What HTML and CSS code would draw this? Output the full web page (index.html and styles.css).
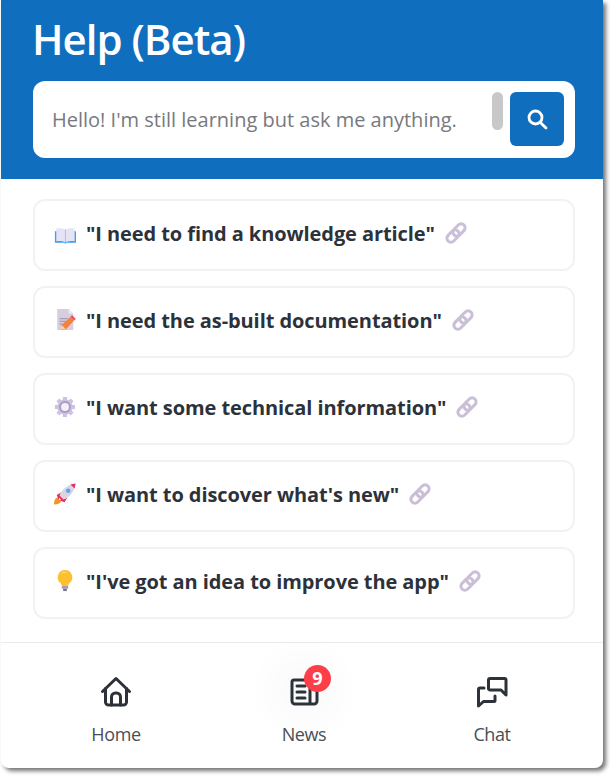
FILE: index.html
```html
<!DOCTYPE html>
<html lang="en">
<head>
<meta charset="utf-8">
<title>Help (Beta)</title>
<link rel="stylesheet" href="styles.css">
</head>
<body>
<svg class="defs" aria-hidden="true"><symbol id="chain" viewBox="0 0 24 24"><g fill="none" stroke="#cbbfd8" stroke-width="3"><rect x="11" y="1.900" width="8" height="14" rx="4" transform="rotate(45 15 8.900)"/><rect x="5" y="8.100" width="8" height="14" rx="4" transform="rotate(45 9 15.100)"/></g></symbol></svg>
<div class="app">
  <header class="header">
    <h1 class="title">Help (Beta)</h1>
    <div class="search">
      <span class="placeholder">Hello! I'm still learning but ask me anything.</span>
      <span class="thumb"></span>
      <button class="search-btn" aria-label="Search">
        <svg width="24" height="24" viewBox="0 0 24 24" fill="none" stroke="#fff" stroke-width="2.800" stroke-linecap="round"><circle cx="10.500" cy="10.500" r="6.500"/><path d="M15.400 15.400 21 21"/></svg>
      </button>
    </div>
  </header>
  <main class="list">
    <a class="card">
      <svg class="emoji" viewBox="0 0 24 24"><path d="M1 10h23v12.500H13.500l-1 1.500-1-1.500H1z" fill="#3da0f0"/><path d="M2.500 7C6 6.500 9.800 6.800 12.500 8.300 15.200 6.800 19 6.500 22.500 7v14c-3.500-.4-7.300 0-10 1.200C9.800 21 6 20.600 2.500 21z" fill="#e6e3f5"/><path d="M12.500 8.300v13.900" stroke="#b9b3d6" stroke-width="1"/></svg>
      <span class="label">"I need to find a knowledge article"</span>
      <svg class="link"><use href="#chain"/></svg>
    </a>
    <a class="card">
      <svg class="emoji" viewBox="0 0 24 24"><path d="M3.500 0h12.500l5 5v18H3.500z" fill="#d6cee0"/><path d="M16 0l5 5h-5z" fill="#efeaf4"/><path d="M6 10.500h9M6 13.500h7M6 16.500h5" stroke="#a79db6" stroke-width="1.200"/><path d="M7 23l1.500-5.500L18 8.500l4 4L13 22z" fill="#f7813c"/><path d="M18 8.500l1.800-1.600 4 4-1.800 1.600z" fill="#f2475c"/><path d="M7 23l1.500-5.500 4 4z" fill="#f8d2a8"/></svg>
      <span class="label">"I need the as-built documentation"</span>
      <svg class="link"><use href="#chain"/></svg>
    </a>
    <a class="card">
      <svg class="emoji" viewBox="0 0 24 24"><circle cx="12" cy="12" r="8.500" fill="#cdc3e0"/><g stroke="#cdc3e0" stroke-width="4.500"><path d="M12 1v22M1 12h22M4.200 4.200l15.600 15.600M19.800 4.200 4.200 19.800"/></g><circle cx="12" cy="12" r="6.500" fill="#a99bc4"/><circle cx="12" cy="12" r="4.300" fill="#f3f0f8"/></svg>
      <span class="label">"I want some technical information"</span>
      <svg class="link"><use href="#chain"/></svg>
    </a>
    <a class="card">
      <svg class="emoji" viewBox="0 0 24 24"><path d="M0 23.500c0-4 1-6.500 3.500-8l4.500 4.500c-1.500 2.500-4 3.500-8 3.500z" fill="#f79329"/><path d="M3 13l5-3-3 8zM11.500 21l3-5-8 3z" fill="#e6305f"/><path d="M6 13.500C8.500 6.500 15.500 1.500 23.500.5c-1 8-6 15-13 17.500z" fill="#dad4e4"/><path d="M18 1.500 23.500.5 22.500 6z" fill="#f0285f"/><circle cx="15.500" cy="8.500" r="2.500" fill="#5ba8e8"/><path d="M6 13.500l4.500 4.500-1.500 1.500-4.500-4.500z" fill="#f0285f"/></svg>
      <span class="label">"I want to discover what's new"</span>
      <svg class="link"><use href="#chain"/></svg>
    </a>
    <a class="card">
      <svg class="emoji" viewBox="0 0 24 24"><path d="M12 0a8 8 0 0 0-5 14.200c1 1 1.500 2 1.500 3.300h7c0-1.300.5-2.300 1.500-3.300A8 8 0 0 0 12 0z" fill="#fdc02f"/><path d="M12 1.500a6 6 0 0 0-5 3 7 7 0 0 1 6.500-1z" fill="#ffe08a"/><path d="M8.500 17.500h7v3h-7z" fill="#a79db6"/><path d="M10 20.500h4V23h-4z" fill="#7d7390"/></svg>
      <span class="label">"I've got an idea to improve the app"</span>
      <svg class="link"><use href="#chain"/></svg>
    </a>
  </main>
  <nav class="nav">
    <a class="nav-item">
      <svg class="nav-icon" viewBox="0 0 32 32" fill="none" stroke="#2d323a" stroke-width="3" stroke-linecap="round" stroke-linejoin="round"><path d="M2.500 15.500 16 2.500l13.500 13"/><path d="M5.500 12.500V26a3 3 0 0 0 3 3h15a3 3 0 0 0 3-3V12.500"/><path d="M11.500 29v-8a4 4 0 0 1 4-4h1a4 4 0 0 1 4 4v8"/></svg>
      <span class="nav-label">Home</span>
    </a>
    <a class="nav-item nav-item-news">
      <span class="icon-wrap">
        <svg class="nav-icon" viewBox="0 0 32 32" fill="none" stroke="#2d323a" stroke-width="3" stroke-linecap="round" stroke-linejoin="round"><path d="M22 27V4H6a2 2 0 0 0-2 2v19a3 3 0 0 0 3 3h19a3 3 0 0 0 3-3V11h-7"/><path d="M9 10h8M9 16h8M9 22h8"/></svg>
        <span class="badge">9</span>
      </span>
      <span class="nav-label">News</span>
    </a>
    <a class="nav-item">
      <svg class="nav-icon" viewBox="0 0 32 32" fill="none" stroke="#2d323a" stroke-width="3" stroke-linecap="round" stroke-linejoin="round"><path d="M14 2.500h14.500A1.500 1.500 0 0 1 30 4v15l-5-5H14a1.500 1.500 0 0 1-1.500-1.500V4A1.500 1.500 0 0 1 14 2.500z"/><path d="M8 12H4a1.500 1.500 0 0 0-1.500 1.500V30l5-4.500H18a1 1 0 0 0 1-1V20"/></svg>
      <span class="nav-label">Chat</span>
    </a>
  </nav>
</div>
</body>
</html>
```
FILE: styles.css
```css
* { box-sizing: border-box; }
html, body { margin: 0; background: #fff; }
body { font-family: "Open Sans", "Noto Sans", sans-serif; color: #2d323a; padding: 0 0 12px 1px; }
.defs { display: none; }
.app {
  width: 602px;
  height: 768px;
  background: #fff;
  display: flex;
  flex-direction: column;
  border-radius: 0 0 8px 8px;
  box-shadow: 3px 3px 4px rgba(0, 0, 0, 0.55);
}
.header {
  background: #106ebe;
  height: 179px;
  padding: 13px 28px 0 32px;
}
.title {
  margin: 0 0 16px -1px;
  color: #fff;
  font-size: 42px;
  line-height: 52px;
  font-weight: 600;
  letter-spacing: -1px;
}
.search {
  height: 77px;
  background: #fff;
  border-radius: 12px;
  display: flex;
  align-items: flex-start;
  padding: 11px 11px 0 19px;
}
.placeholder {
  flex: 1;
  font-size: 20px;
  line-height: 56px;
  color: #77797e;
  white-space: nowrap;
}
.thumb {
  width: 11px;
  height: 38px;
  border-radius: 6px;
  background: #c8c8c8;
  margin-right: 7px;
}
.search-btn {
  width: 54px;
  height: 54px;
  border: 0;
  border-radius: 6px;
  background: #106ebe;
  padding: 0;
  display: flex;
  align-items: center;
  justify-content: center;
}
.list {
  flex: 1;
  padding: 20px 28px 0 32px;
  display: flex;
  flex-direction: column;
  gap: 15px;
}
.card {
  height: 72px;
  border: 2px solid #f1f2f6;
  border-radius: 12px;
  background: #fff;
  display: flex;
  align-items: center;
  padding: 0 0 4px 19px;
}
.emoji { width: 22px; height: 22px; flex: none; margin-right: 10px; }
.label {
  font-size: 20px;
  font-weight: 700;
  letter-spacing: -0.080px;
  color: #2d323a;
  white-space: nowrap;
}
.link { width: 24px; height: 24px; flex: none; margin-left: 9px; }
.nav {
  height: 126px;
  border-top: 1px solid #e9eaee;
  padding: 0 17px 0 21px;
  display: grid;
  grid-template-columns: repeat(3, 1fr);
}
.nav-item {
  display: flex;
  flex-direction: column;
  align-items: center;
  padding-top: 33px;
}
.nav-item-news {
  background: radial-gradient(circle at 50% 38%, rgba(0, 0, 0, 0.025), rgba(0, 0, 0, 0) 55px);
}
.icon-wrap { position: relative; display: block; height: 32px; }
.nav-icon { width: 32px; height: 32px; display: block; }
.badge {
  position: absolute;
  top: -11px;
  left: 16px;
  width: 27px;
  height: 27px;
  border-radius: 50%;
  background: #fd3e48;
  color: #fff;
  font-size: 18px;
  font-weight: 700;
  line-height: 26px;
  text-align: center;
}
.nav-label {
  margin-top: 14px;
  font-size: 18px;
  line-height: 24px;
  letter-spacing: -0.400px;
  color: #4a4e55;
}
```
